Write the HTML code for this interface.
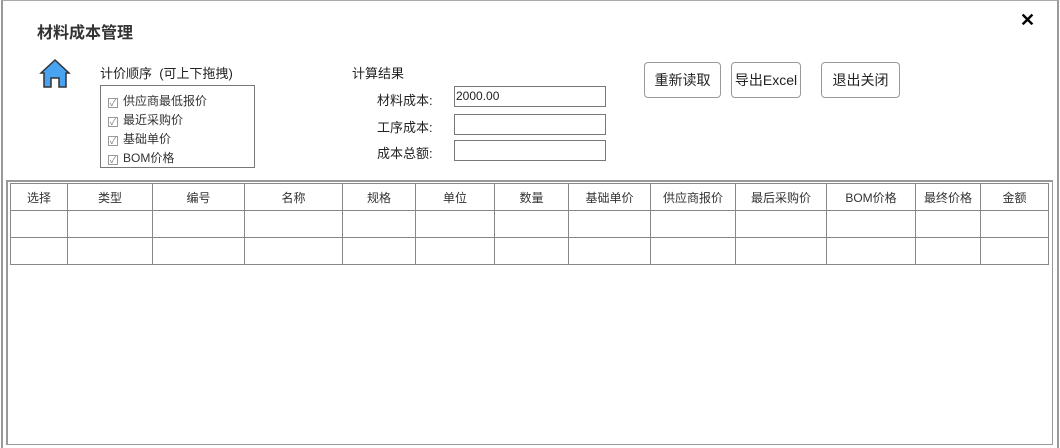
<!DOCTYPE html>
<html><head><meta charset="utf-8"><style>
*{margin:0;padding:0;box-sizing:border-box}
body{width:1060px;height:448px;background:#fff;position:relative;overflow:hidden;font-family:"Liberation Sans","Noto Sans CJK SC",sans-serif;color:#222;font-size:12px}
.a{position:absolute;white-space:nowrap}
.frame{left:1px;top:0;width:1058px;height:448px;border-left:2px solid #999;border-right:2px solid #999;border-top:1px solid #aaa}
.title{left:37px;top:19px;font-size:16px;font-weight:bold;color:#333}
.lbl{font-size:13px}
.inp{border:1px solid #777;height:21px;width:152px;left:454px;font-size:12px;padding:2px 0 0 1px}
.btn{border:1px solid #999;border-radius:4px;height:36px;top:62px;font-size:14px;text-align:center;line-height:34px;background:#fff}
.cb{font-size:12px;color:#333;left:108px}
.cb span{display:inline-block;width:10px;height:10px;border:1px solid #999;font-size:9px;line-height:8px;text-align:center;color:#777;margin-right:5px;vertical-align:-1px}
table{border-collapse:collapse;position:absolute;left:10px;top:183px;width:1039px}
td{border:1px solid #888;height:27px;text-align:center;font-size:12px;color:#333}
</style></head><body>
<div class="a frame"></div>
<div class="a title">材料成本管理</div>
<svg class="a" style="left:39px;top:58px" width="32" height="30" viewBox="0 0 32 30"><path d="M2 15 L16 2 L30 15 L27 15 L27 29 L20 29 L20 20 L12 20 L12 29 L5 29 L5 15 Z" fill="#4aa3f0" stroke="#333" stroke-width="1.5"/></svg>
<div class="a lbl" style="left:100px;top:63px">计价顺序 &nbsp;(可上下拖拽)</div>
<div class="a" style="left:100px;top:85px;width:155px;height:83px;border:1px solid #777"></div>
<div class="a cb" style="top:92px"><span>✓</span>供应商最低报价</div>
<div class="a cb" style="top:111px"><span>✓</span>最近采购价</div>
<div class="a cb" style="top:130px"><span>✓</span>基础单价</div>
<div class="a cb" style="top:149px"><span>✓</span>BOM价格</div>
<div class="a lbl" style="left:352px;top:63px">计算结果</div>
<div class="a lbl" style="left:377px;top:90px">材料成本:</div>
<div class="a lbl" style="left:377px;top:117px">工序成本:</div>
<div class="a lbl" style="left:377px;top:143px">成本总额:</div>
<div class="a inp" style="top:86px">2000.00</div>
<div class="a inp" style="top:114px"></div>
<div class="a inp" style="top:140px"></div>
<div class="a btn" style="left:644px;width:77px">重新读取</div>
<div class="a btn" style="left:731px;width:70px">导出Excel</div>
<div class="a btn" style="left:821px;width:79px">退出关闭</div>
<div class="a" style="left:1020px;top:10px;font-size:18px;font-weight:bold;color:#000">✕</div>
<div class="a" style="left:6px;top:180px;width:1047px;height:265px;border:2px solid #999;border-right-width:1px;border-bottom-width:1px"></div>
<table>
<tr><td style="width:57px">选择</td><td style="width:85px">类型</td><td style="width:92px">编号</td><td style="width:98px">名称</td><td style="width:73px">规格</td><td style="width:79px">单位</td><td style="width:74px">数量</td><td style="width:82px">基础单价</td><td style="width:85px">供应商报价</td><td style="width:91px">最后采购价</td><td style="width:89px">BOM价格</td><td style="width:65px">最终价格</td><td>金额</td></tr>
<tr><td></td><td></td><td></td><td></td><td></td><td></td><td></td><td></td><td></td><td></td><td></td><td></td><td></td></tr>
<tr><td></td><td></td><td></td><td></td><td></td><td></td><td></td><td></td><td></td><td></td><td></td><td></td><td></td></tr>
</table>
</body></html>
